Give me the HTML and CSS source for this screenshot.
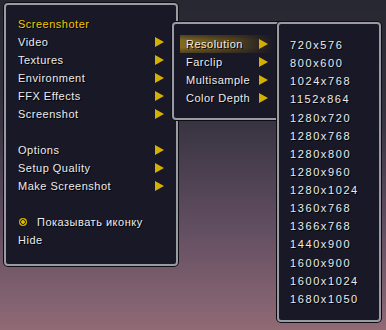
FILE: index.html
```html
<!DOCTYPE html>
<html lang="en">
<head>
    <meta charset="UTF-8">
    <title>Screenshoter</title>
    <link rel="stylesheet" href="styles.css">
</head>
<body>
    <div class="menu main-menu">
        <div class="item title">Screenshoter</div>
        <div class="item sub">Video <span class="arrow"></span></div>
        <div class="item sub">Textures <span class="arrow"></span></div>
        <div class="item sub">Environment <span class="arrow"></span></div>
        <div class="item sub">FFX Effects <span class="arrow"></span></div>
        <div class="item sub">Screenshot <span class="arrow"></span></div>
        <div class="item"></div>
        <div class="item sub">Options <span class="arrow"></span></div>
        <div class="item sub">Setup Quality <span class="arrow"></span></div>
        <div class="item sub">Make Screenshot <span class="arrow"></span></div>
        <div class="item"></div>
        <div class="item check"><span class="radio"></span>Показывать иконку</div>
        <div class="item">Hide</div>
    </div>

    <div class="menu sub-menu">
        <div class="item sub active">Resolution <span class="arrow"></span></div>
        <div class="item sub">Farclip <span class="arrow"></span></div>
        <div class="item sub">Multisample <span class="arrow"></span></div>
        <div class="item sub">Color Depth <span class="arrow"></span></div>
    </div>

    <div class="menu res-menu">
        <div class="item">720x576</div>
        <div class="item">800x600</div>
        <div class="item">1024x768</div>
        <div class="item">1152x864</div>
        <div class="item">1280x720</div>
        <div class="item">1280x768</div>
        <div class="item">1280x800</div>
        <div class="item">1280x960</div>
        <div class="item">1280x1024</div>
        <div class="item">1360x768</div>
        <div class="item">1366x768</div>
        <div class="item">1440x900</div>
        <div class="item">1600x900</div>
        <div class="item">1600x1024</div>
        <div class="item">1680x1050</div>
    </div>
</body>
</html>
```

FILE: styles.css
```css
/* styles.css */

body {
    margin: 0;
    width: 386px;
    height: 330px;
    overflow: hidden;
    display: flex;
    align-items: flex-start;
    font-family: "Liberation Sans", Arial, sans-serif;
    font-size: 11px;
    color: #ececec;
    background: linear-gradient(#272731 0%, #36323f 35%, #634f62 70%, #906a75 100%);
}

.menu {
    box-sizing: border-box;
    background-color: #191826;
    border: 2px solid #9a9aa2;
    border-radius: 4px;
    box-shadow: 0 0 0 1px #0d0d12;
}

.item {
    height: 18px;
    line-height: 18px;
    letter-spacing: 0.5px;
    text-shadow: 1px 1px 0 #000;
    white-space: nowrap;
}

.sub {
    display: flex;
    justify-content: space-between;
    align-items: center;
}

.arrow {
    width: 0;
    height: 0;
    border-top: 5px solid transparent;
    border-bottom: 5px solid transparent;
    border-left: 9px solid #d4b000;
}

.main-menu {
    width: 174px;
    height: 263px;
    margin: 3px 0 0 4px;
    padding: 10px 12px 0 12px;
}

.title {
    color: #f2c800;
}

.check {
    display: flex;
    align-items: center;
}

.radio {
    width: 8px;
    height: 8px;
    margin: 0 10px 0 1px;
    border-radius: 50%;
    background: radial-gradient(circle, #e0bc00 0 1.5px, #2c2500 2px 2.5px, #cfac00 3px);
}

.sub-menu {
    position: relative;
    width: 110px;
    height: 98px;
    margin: 22px 0 0 -6px;
    padding: 11px 12px 0 12px;
}

.active {
    margin: 0 -6px;
    padding: 0 6px;
    background:
        linear-gradient(rgba(25, 24, 38, 0.5), rgba(25, 24, 38, 0) 30%, rgba(25, 24, 38, 0) 70%, rgba(25, 24, 38, 0.5)),
        linear-gradient(90deg, rgba(160, 128, 30, 0.8) 0%, rgba(125, 98, 22, 0.55) 60%, rgba(100, 80, 20, 0) 100%);
}

.res-menu {
    position: relative;
    width: 104px;
    height: 300px;
    margin: 22px 0 0 -5px;
    padding: 12px 11px 0 11px;
}

.res-menu .item {
    letter-spacing: 1.6px;
    height: 18.14px;
}
```
